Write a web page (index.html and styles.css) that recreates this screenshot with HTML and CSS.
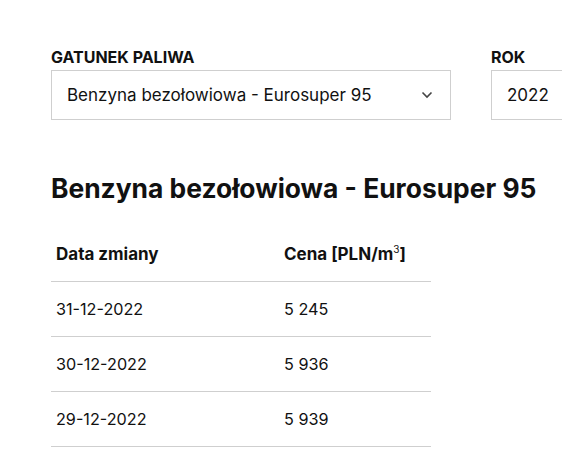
FILE: index.html
```html
<!DOCTYPE html>
<html lang="pl">
<head>
<meta charset="utf-8">
<link rel="stylesheet" href="styles.css">
</head>
<body>
<div class="page">
  <div class="filters">
    <div class="field field-fuel">
      <div class="label">GATUNEK PALIWA</div>
      <div class="select">
        <span class="select-value">Benzyna bezołowiowa - Eurosuper 95</span>
        <svg class="chevron" width="12" height="8" viewBox="0 0 12 8"><path d="M1.5 1.5 L6 6 L10.5 1.5" fill="none" stroke="#444" stroke-width="1.6"/></svg>
      </div>
    </div>
    <div class="field field-year">
      <div class="label">ROK</div>
      <div class="select">
        <span class="select-value">2022</span>
      </div>
    </div>
  </div>
  <h1 class="title">Benzyna bezołowiowa - Eurosuper 95</h1>
  <table class="prices">
    <thead>
      <tr><th class="col-date">Data zmiany</th><th>Cena [PLN/m<sup>3</sup>]</th></tr>
    </thead>
    <tbody>
      <tr><td>31-12-2022</td><td>5 245</td></tr>
      <tr><td>30-12-2022</td><td>5 936</td></tr>
      <tr><td>29-12-2022</td><td>5 939</td></tr>
    </tbody>
  </table>
</div>
</body>
</html>
```
FILE: styles.css
```css
html, body {
  margin: 0;
  padding: 0;
  background: #fff;
}
body {
  font-family: Inter, "Open Sans", sans-serif;
  color: #111;
}
.page {
  padding: 47px 0 0 51px;
  height: 457px;
  box-sizing: border-box;
  overflow: hidden;
}
.filters {
  display: flex;
  gap: 40px;
  width: 700px;
}
.label {
  font-size: 16px;
  font-weight: 700;
  line-height: 20px;
  margin-bottom: 3px;
}
.select {
  box-sizing: border-box;
  height: 50px;
  border: 1px solid #cfcfcf;
  display: flex;
  align-items: center;
  justify-content: space-between;
  padding: 0 17px 0 15px;
  font-size: 17px;
}
.field-fuel .select { width: 400px; }
.field-year .select { width: 200px; }
.chevron { display: block; }
.title {
  margin: 52px 0 0 0;
  font-size: 26.4px;
  line-height: 32px;
  font-weight: 700;
}
.prices {
  border-collapse: collapse;
  width: 380px;
  margin-top: 23px;
  font-size: 16.2px;
}
.prices th, .prices td {
  text-align: left;
  padding: 0 0 0 5px;
  height: 54px;
  border-bottom: 1px solid #cfcfcf;
}
.prices td + td, .prices th + th {
  padding-left: 0;
}
.prices thead th {
  font-weight: 700;
  font-size: 17px;
}
.col-date { width: 228px; }
.prices sup {
  font-size: 10px;
  font-weight: 400;
  line-height: 0;
}
```
